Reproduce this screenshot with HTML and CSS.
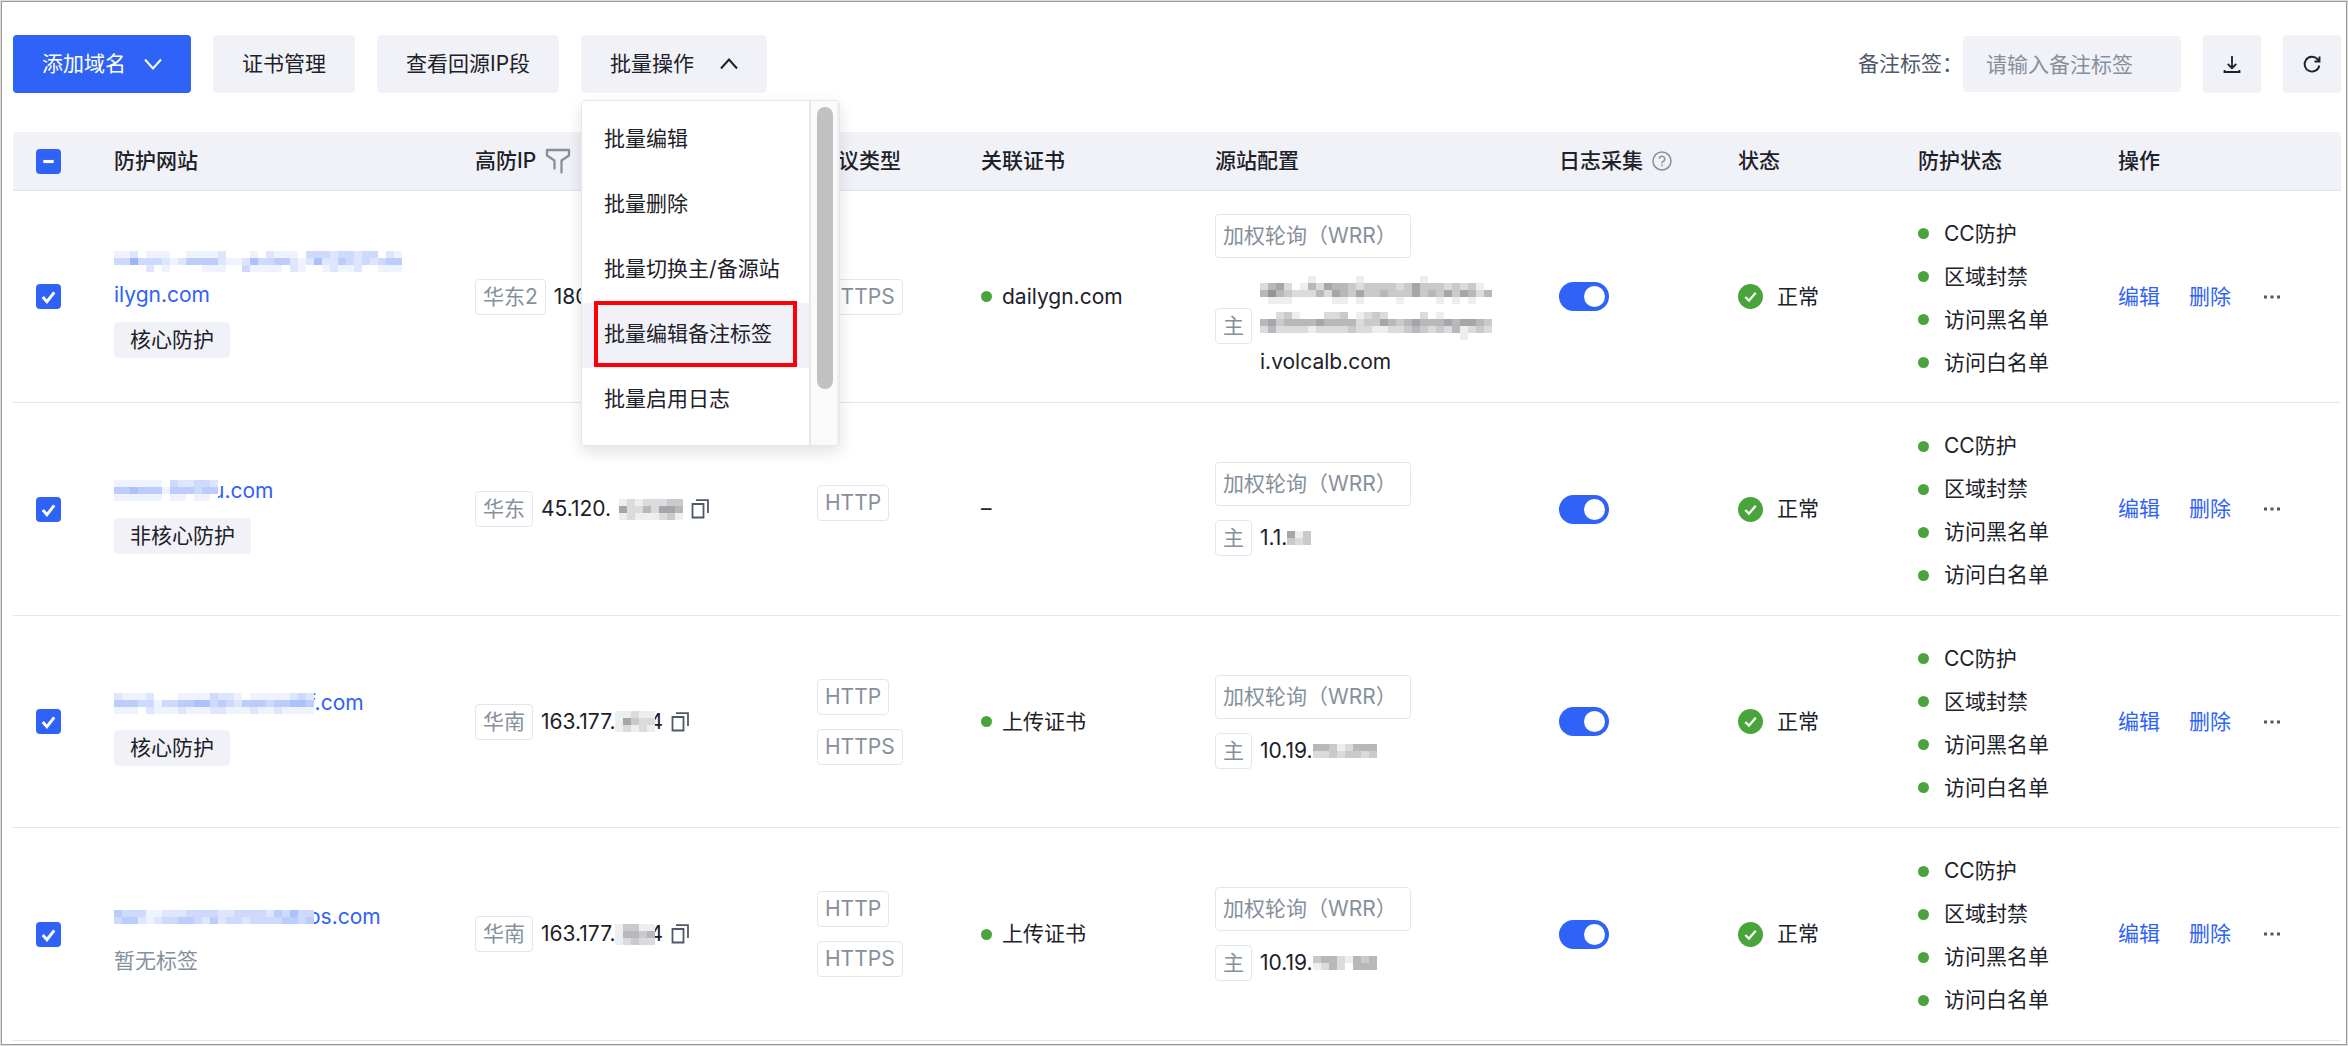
FILE: index.html
```html
<!DOCTYPE html>
<html lang="zh-CN">
<head>
<meta charset="utf-8">
<meta name="viewport" content="width=device-width, initial-scale=1">
<title>防护网站</title>
<link rel="stylesheet" href="styles.css">
</head>
<body>
<svg class="sprite" aria-hidden="true">
  <symbol id="i-down" viewBox="0 0 18 18"><path d="M1 4.500l8 9 8-9" fill="none" stroke="currentColor" stroke-width="2"/></symbol>
  <symbol id="i-up" viewBox="0 0 18 18"><path d="M1 13.500l8-9 8 9" fill="none" stroke="currentColor" stroke-width="2"/></symbol>
  <symbol id="i-download" viewBox="0 0 20 20"><path d="M10 2v12M5.800 10l4.200 4.200 4.200-4.200M2.500 16v2h15v-2" fill="none" stroke="currentColor" stroke-width="1.800"/></symbol>
  <symbol id="i-refresh" viewBox="0 0 20 20"><path d="M17.300 11.500a7.400 7.400 0 1 1-1.800-6.300l1 1.300M17.500 2.500v5h-5" fill="none" stroke="currentColor" stroke-width="1.900"/></symbol>
  <symbol id="i-filter" viewBox="0 0 26 26"><path d="M9.500 20.500v-8L2 7.500V2h22v5.500l-7.500 5V24.500" fill="none" stroke="currentColor" stroke-width="2.300" stroke-linecap="round" stroke-linejoin="round"/></symbol>
  <symbol id="i-help" viewBox="0 0 20 20"><circle cx="10" cy="10" r="9" fill="none" stroke="currentColor" stroke-width="1.500"/><path d="M7.300 7.800a2.700 2.700 0 1 1 3.800 2.600c-.8.4-1.100.8-1.100 1.800M10 13.600v1.700" fill="none" stroke="currentColor" stroke-width="1.500"/></symbol>
  <symbol id="i-copy" viewBox="0 0 18 20"><path d="M1.500 5h11v13.500h-11zM5 1.200h12V14" fill="none" stroke="currentColor" stroke-width="1.800"/></symbol>
  <symbol id="i-check" viewBox="0 0 24 24"><path d="M6.500 12.500l4 4.500 7-9" fill="none" stroke="#fff" stroke-width="2.800"/></symbol>
  <symbol id="i-minus" viewBox="0 0 24 24"><path d="M7 12h10" fill="none" stroke="#fff" stroke-width="3"/></symbol>
  <symbol id="i-ok" viewBox="0 0 24 24"><circle cx="12" cy="12" r="12" fill="currentColor"/><path d="M7 12.500l3.500 3.500 6.500-7.500" fill="none" stroke="#fff" stroke-width="2.200"/></symbol>
  <symbol id="i-more" viewBox="0 0 18 4"><path d="M1 .5h3v3H1zM7.500.5h3v3h-3zM14 .5h3v3h-3z" fill="currentColor"/></symbol>
</svg>

<main class="frame">
  <div class="toolbar">
    <button class="btn btn-primary" type="button">添加域名<svg class="chevron"><use href="#i-down"/></svg></button>
    <button class="btn" type="button">证书管理</button>
    <button class="btn" type="button">查看回源IP段</button>
    <div class="dropdown">
      <button class="btn btn-batch" type="button" aria-expanded="true">批量操作<svg class="chevron"><use href="#i-up"/></svg></button>
      <div class="menu">
        <div class="menu-list">
          <button class="menu-item" type="button">批量编辑</button>
          <button class="menu-item" type="button">批量删除</button>
          <button class="menu-item" type="button">批量切换主/备源站</button>
          <button class="menu-item active" type="button">批量编辑备注标签</button>
          <button class="menu-item" type="button">批量启用日志</button>
        </div>
        <div class="menu-track"><div class="menu-thumb"></div></div>
      </div>
    </div>
    <div class="search">
      <label for="tag-search">备注标签：</label>
      <input id="tag-search" type="text" placeholder="请输入备注标签">
    </div>
    <button class="btn btn-icon" type="button" aria-label="下载"><svg><use href="#i-download"/></svg></button>
    <button class="btn btn-icon" type="button" aria-label="刷新"><svg><use href="#i-refresh"/></svg></button>
  </div>

  <table class="sites">
    <colgroup>
      <col class="c-check"><col class="c-site"><col class="c-ip"><col class="c-proto"><col class="c-cert">
      <col class="c-origin"><col class="c-log"><col class="c-status"><col class="c-protect"><col class="c-ops">
    </colgroup>
    <thead>
      <tr>
        <th><label class="check"><input type="checkbox" checked aria-label="全选"><svg><use href="#i-minus"/></svg></label></th>
        <th>防护网站</th>
        <th><span class="line">高防IP<svg class="filter"><use href="#i-filter"/></svg></span></th>
        <th>协议类型</th>
        <th>关联证书</th>
        <th>源站配置</th>
        <th><span class="line">日志采集<svg class="help"><use href="#i-help"/></svg></span></th>
        <th>状态</th>
        <th>防护状态</th>
        <th>操作</th>
      </tr>
    </thead>
    <tbody>
      <tr>
        <td><label class="check"><input type="checkbox" checked aria-label="选择"><svg><use href="#i-check"/></svg></label></td>
        <td>
          <div class="site">
            <a href="#"><svg class="mosaic" data-levels="112011100111120001021110333233233021/336333212444421125334421252243232344/000020100001110031111021001211200111"></svg></a>
            <a href="#">ilygn.com</a>
            <span class="label">核心防护</span>
          </div>
        </td>
        <td><div class="line ip"><span class="tag">华东2</span><span>180.</span></div></td>
        <td><div class="protos"><span class="tag">HTTPS</span></div></td>
        <td><div class="line cert"><i class="dot"></i>dailygn.com</div></td>
        <td>
          <div class="origin">
            <span class="tag policy">加权轮询（WRR）</span>
            <div class="line server"><span class="tag">主</span>
              <div class="host">
                <svg class="mosaic" data-levels="00000010000010000000100000000/24520142544323333235333232310/46432224254353343335343535424/01110000011010000100001010100"></svg>
                <svg class="mosaic" data-levels="00231000223012320000201000000/45344445444423354345444545543/24222212222322112234323241232/00000000000000000000000001000"></svg>
                <span>i.volcalb.com</span>
              </div>
            </div>
          </div>
        </td>
        <td><input class="switch" type="checkbox" role="switch" checked aria-label="日志采集"></td>
        <td><div class="line status"><svg><use href="#i-ok"/></svg>正常</div></td>
        <td><ul class="protect"><li><i class="dot"></i>CC防护</li><li><i class="dot"></i>区域封禁</li><li><i class="dot"></i>访问黑名单</li><li><i class="dot"></i>访问白名单</li></ul></td>
        <td><div class="line ops"><a href="#">编辑</a><a href="#">删除</a><button type="button" aria-label="更多"><svg><use href="#i-more"/></svg></button></div></td>
      </tr>
      <tr>
        <td><label class="check"><input type="checkbox" checked aria-label="选择"><svg><use href="#i-check"/></svg></label></td>
        <td>
          <div class="site">
            <a class="line" href="#"><svg class="mosaic cover" data-levels="1111110322332/4454441444344/1111110110110"></svg>u.com</a>
            <span class="label">非核心防护</span>
          </div>
        </td>
        <td><div class="line ip"><span class="tag">华东</span><span class="line">45.120.<svg class="mosaic" data-levels="012122233/052242554/012111231"></svg></span><svg class="copy"><use href="#i-copy"/></svg></div></td>
        <td><div class="protos single"><span class="tag">HTTP</span></div></td>
        <td>–</td>
        <td>
          <div class="origin">
            <span class="tag policy">加权轮询（WRR）</span>
            <div class="line server"><span class="tag">主</span><span class="line">1.1.<svg class="mosaic" data-levels="513/323"></svg></span></div>
          </div>
        </td>
        <td><input class="switch" type="checkbox" role="switch" checked aria-label="日志采集"></td>
        <td><div class="line status"><svg><use href="#i-ok"/></svg>正常</div></td>
        <td><ul class="protect"><li><i class="dot"></i>CC防护</li><li><i class="dot"></i>区域封禁</li><li><i class="dot"></i>访问黑名单</li><li><i class="dot"></i>访问白名单</li></ul></td>
        <td><div class="line ops"><a href="#">编辑</a><a href="#">删除</a><button type="button" aria-label="更多"><svg><use href="#i-more"/></svg></button></div></td>
      </tr>
      <tr>
        <td><label class="check"><input type="checkbox" checked aria-label="选择"><svg><use href="#i-check"/></svg></label></td>
        <td>
          <div class="site">
            <a class="line" href="#"><svg class="mosaic cover" data-levels="2111200011113221011111232/4443313344553432444344554/1110211121112211121121111"></svg>f.com</a>
            <span class="label">核心防护</span>
          </div>
        </td>
        <td><div class="line ip"><span class="tag">华南</span><span class="line">163.177.<svg class="mosaic cover" data-levels="11211/15322/12121"></svg>4</span><svg class="copy"><use href="#i-copy"/></svg></div></td>
        <td><div class="protos"><span class="tag">HTTP</span><span class="tag">HTTPS</span></div></td>
        <td><div class="line cert"><i class="dot"></i>上传证书</div></td>
        <td>
          <div class="origin">
            <span class="tag policy">加权轮询（WRR）</span>
            <div class="line server"><span class="tag">主</span><span class="line">10.19.<svg class="mosaic" data-levels="44312444/22323323"></svg></span></div>
          </div>
        </td>
        <td><input class="switch" type="checkbox" role="switch" checked aria-label="日志采集"></td>
        <td><div class="line status"><svg><use href="#i-ok"/></svg>正常</div></td>
        <td><ul class="protect"><li><i class="dot"></i>CC防护</li><li><i class="dot"></i>区域封禁</li><li><i class="dot"></i>访问黑名单</li><li><i class="dot"></i>访问白名单</li></ul></td>
        <td><div class="line ops"><a href="#">编辑</a><a href="#">删除</a><button type="button" aria-label="更多"><svg><use href="#i-more"/></svg></button></div></td>
      </tr>
      <tr>
        <td><label class="check"><input type="checkbox" checked aria-label="选择"><svg><use href="#i-check"/></svg></label></td>
        <td>
          <div class="site">
            <a class="line" href="#"><svg class="mosaic cover" data-levels="4333112223333223333243533/3442123344324233233334434"></svg>os.com</a>
            <span class="empty">暂无标签</span>
          </div>
        </td>
        <td><div class="line ip"><span class="tag">华南</span><span class="line">163.177.<svg class="mosaic cover" data-levels="13311/14434/12322"></svg>4</span><svg class="copy"><use href="#i-copy"/></svg></div></td>
        <td><div class="protos"><span class="tag">HTTP</span><span class="tag">HTTPS</span></div></td>
        <td><div class="line cert"><i class="dot"></i>上传证书</div></td>
        <td>
          <div class="origin">
            <span class="tag policy">加权轮询（WRR）</span>
            <div class="line server"><span class="tag">主</span><span class="line">10.19.<svg class="mosaic" data-levels="34421434/12420444"></svg></span></div>
          </div>
        </td>
        <td><input class="switch" type="checkbox" role="switch" checked aria-label="日志采集"></td>
        <td><div class="line status"><svg><use href="#i-ok"/></svg>正常</div></td>
        <td><ul class="protect"><li><i class="dot"></i>CC防护</li><li><i class="dot"></i>区域封禁</li><li><i class="dot"></i>访问黑名单</li><li><i class="dot"></i>访问白名单</li></ul></td>
        <td><div class="line ops"><a href="#">编辑</a><a href="#">删除</a><button type="button" aria-label="更多"><svg><use href="#i-more"/></svg></button></div></td>
      </tr>
    </tbody>
  </table>
</main>
<script src="script.js"></script>
</body>
</html>
```
FILE: styles.css
```css
:root {
  --blue: #2f62f6;
  --green: #4aa43c;
  --ink: #1d2129;
  --muted: #86909c;
  --soft: #4e5969;
  --fill: #f1f2f7;
  --line: #e5e6eb;
}

* { box-sizing: border-box; }

body {
  margin: 0;
  padding: 1px;
  background: #dcdcdc;
  color: var(--ink);
  font: 21px/34px Inter, "Noto Sans CJK SC", sans-serif;
}

button, input {
  font: inherit;
  color: inherit;
}

button { cursor: pointer; }

a {
  color: var(--blue);
  text-decoration: none;
}

.sprite {
  position: absolute;
  width: 0;
  height: 0;
}

.frame {
  padding: 33px 5px 3px 11px;
  border: 1px solid #999;
  background: #fff;
}

/* Toolbar */
.toolbar {
  display: flex;
  align-items: center;
  gap: 22px;
  margin-bottom: 39px;
}

.btn {
  display: flex;
  align-items: center;
  justify-content: center;
  gap: 18px;
  height: 58px;
  padding: 0 29px;
  border: 0;
  border-radius: 4px;
  background: var(--fill);
  white-space: nowrap;
}

.btn-primary {
  background: var(--blue);
  color: #fff;
}

.btn-batch { gap: 26px; }

.btn-icon {
  width: 58px;
  padding: 0;
}

.btn-icon svg {
  width: 20px;
  height: 20px;
}

.chevron {
  width: 18px;
  height: 18px;
}

.search {
  display: flex;
  align-items: center;
  margin-left: auto;
  color: var(--soft);
}

.search input {
  width: 218px;
  height: 56px;
  padding: 0 23px;
  border: 0;
  border-radius: 4px;
  background: var(--fill);
}

.search input::placeholder { color: var(--muted); }

/* Batch menu */
.dropdown { position: relative; }

.menu {
  position: absolute;
  top: 65px;
  left: 0;
  z-index: 2;
  display: flex;
  width: 259px;
  height: 346px;
  border: 1px solid var(--line);
  border-radius: 4px;
  background: #fff;
  box-shadow: 0 6px 16px rgba(0, 0, 0, .12);
}

.menu-list {
  flex: 1;
  padding-top: 7px;
}

.menu-item {
  display: block;
  width: 100%;
  height: 65px;
  padding: 0 22px 3px;
  border: 0;
  background: none;
  text-align: left;
  white-space: nowrap;
}

.menu-item.active {
  position: relative;
  background: var(--fill);
}

.menu-item.active::after {
  content: "";
  position: absolute;
  inset: -2px 12px 1px;
  border: 4px solid #fb0007;
}

.menu-track {
  width: 30px;
  padding: 6px 5px 0 6px;
  border-left: 2px solid #e8e8e8;
  border-right: 2px solid #efefef;
  background: #fafafa;
}

.menu-thumb {
  width: 16px;
  height: 282px;
  border-radius: 8px;
  background: #c1c1c1;
}

/* Table */
.sites {
  width: 100%;
  table-layout: fixed;
  border-spacing: 0;
}

.c-check { width: 78px; }
.c-site { width: 361px; }
.c-ip { width: 342px; }
.c-proto { width: 164px; }
.c-cert { width: 234px; }
.c-origin { width: 344px; }
.c-log { width: 179px; }
.c-status { width: 180px; }
.c-protect { width: 200px; }
.c-ops { width: 246px; }

th, td {
  padding: 0 0 0 23px;
  border-bottom: 1px solid var(--line);
  text-align: left;
  vertical-align: middle;
  white-space: nowrap;
}

th {
  height: 59px;
  background: var(--fill);
  font-weight: 500;
}

th:first-child { border-top-left-radius: 4px; }
th:last-child { border-top-right-radius: 4px; }

td { height: 212px; }
tr:nth-child(even) td { height: 213px; }

.line {
  display: flex;
  align-items: center;
}

.filter {
  width: 26px;
  height: 26px;
  margin-left: 9px;
  color: var(--muted);
}

.help {
  width: 20px;
  height: 20px;
  margin-left: 9px;
  color: var(--muted);
}

.check {
  display: grid;
  width: 25px;
  height: 25px;
}

.check > * {
  grid-area: 1 / 1;
  width: 25px;
  height: 25px;
  margin: 0;
}

.check input {
  appearance: none;
  border-radius: 4px;
  background: var(--blue);
}

.check svg { pointer-events: none; }

.site {
  display: flex;
  flex-direction: column;
  align-items: flex-start;
  padding-top: 9px;
}

.site a {
  display: flex;
  align-items: center;
  height: 34px;
}

.label {
  height: 36px;
  margin-top: 10px;
  padding: 0 16px;
  border-radius: 4px;
  background: var(--fill);
  line-height: 36px;
}

.empty {
  margin-top: 10px;
  color: var(--muted);
}

.tag {
  height: 36px;
  padding: 0 7px;
  border: 1px solid var(--line);
  border-radius: 4px;
  color: var(--muted);
}

.ip { gap: 8px; }

.copy {
  width: 18px;
  height: 20px;
  color: var(--soft);
}

.mosaic {
  display: block;
  flex: none;
}

.cover {
  position: relative;
  margin-right: -6px;
  background: #fff;
}

.protos {
  display: flex;
  flex-direction: column;
  align-items: flex-start;
  gap: 14px;
}

.single { padding-bottom: 12px; }

.dot {
  width: 11px;
  height: 11px;
  border-radius: 50%;
  background: var(--green);
}

.cert { gap: 10px; }

.origin {
  display: flex;
  flex-direction: column;
  align-items: flex-start;
  gap: 14px;
}

.policy {
  min-width: 196px;
  height: 44px;
  line-height: 42px;
}

.server { gap: 8px; }

.host {
  display: grid;
  grid-auto-rows: 36px;
  align-items: center;
}

.switch {
  appearance: none;
  display: block;
  width: 50px;
  height: 29px;
  margin: 0;
  padding: 4px;
  border-radius: 15px;
  background: var(--blue);
}

.switch::before {
  content: "";
  display: block;
  width: 21px;
  height: 21px;
  margin-left: auto;
  border-radius: 50%;
  background: #fff;
}

.status { gap: 14px; }

.status svg {
  width: 25px;
  height: 25px;
  color: var(--green);
}

.protect {
  margin: 0;
  padding: 3px 0 0;
  list-style: none;
}

.protect li {
  display: flex;
  align-items: center;
  gap: 15px;
  height: 43px;
}

.ops { gap: 29px; }

.ops button {
  display: flex;
  padding: 0 3px;
  border: 0;
  background: none;
  color: var(--soft);
}

.ops svg {
  width: 18px;
  height: 4px;
}
```
FILE: script.js
```js
// Masked names: each digit is the strength of one cell, rows are split by "/".
const CELL_W = 8;
const CELL_H = 7;
const NS = "http://www.w3.org/2000/svg";

document.querySelectorAll(".mosaic").forEach((svg) => {
  const rows = svg.dataset.levels.split("/");
  svg.setAttribute("width", rows[0].length * CELL_W);
  svg.setAttribute("height", rows.length * CELL_H);
  svg.setAttribute("aria-hidden", "true");
  rows.forEach((row, y) => {
    [...row].forEach((level, x) => {
      const cell = document.createElementNS(NS, "rect");
      cell.setAttribute("x", x * CELL_W);
      cell.setAttribute("y", y * CELL_H);
      cell.setAttribute("width", CELL_W);
      cell.setAttribute("height", CELL_H);
      cell.setAttribute("fill", "currentColor");
      cell.setAttribute("fill-opacity", level * 0.08);
      svg.appendChild(cell);
    });
  });
});
```
